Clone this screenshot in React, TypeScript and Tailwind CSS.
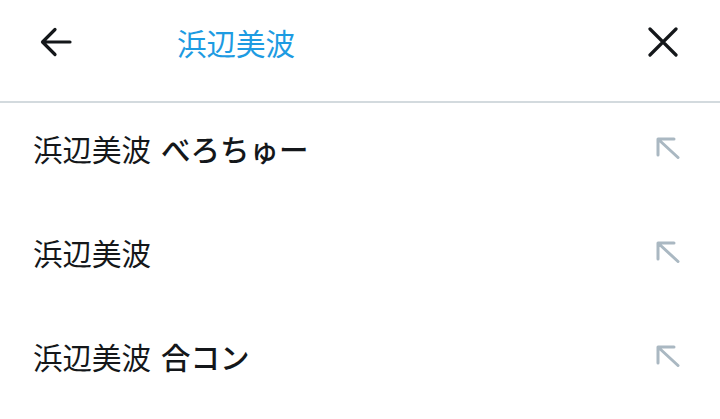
const font = { fontFamily: '"Noto Sans CJK JP", "Noto Sans", sans-serif' };

function BackIcon() {
  return (
    <svg width="32" height="30" viewBox="0 0 32 30" fill="none" stroke="#14171a" strokeWidth="3.2" strokeLinecap="round" strokeLinejoin="round">
      <path d="M30 15H3M15 2.5L2.5 15L15 27.5" />
    </svg>
  );
}

function CloseIcon() {
  return (
    <svg width="30" height="30" viewBox="0 0 30 30" fill="none" stroke="#14171a" strokeWidth="3.2" strokeLinecap="round">
      <path d="M2 2L28 28M28 2L2 28" />
    </svg>
  );
}

function FillIcon() {
  return (
    <svg width="24" height="22" viewBox="0 0 24 22" fill="none" stroke="#aab8c2" strokeWidth="3" strokeLinecap="round" strokeLinejoin="round">
      <path d="M2 2H18M2 2V18M2.5 2.5L22 20.5" />
    </svg>
  );
}

const suggestions = [
  { base: '浜辺美波', extra: 'べろちゅー' },
  { base: '浜辺美波', extra: '' },
  { base: '浜辺美波', extra: '合コン' },
];

export default function App() {
  return (
    <div className="w-[720px] h-[419px] bg-white overflow-hidden text-[#14171a]" style={font}>
      <header className="h-[103px] flex items-center border-b-2 border-[#d3dade] pb-[17px]">
        <button className="ml-[40px] w-[32px] flex items-center">
          <BackIcon />
        </button>
        <p className="ml-[105px] text-[29.5px] leading-[40px] text-[#1d9be2]">浜辺美波</p>
        <button className="ml-auto mr-[42px] flex items-center">
          <CloseIcon />
        </button>
      </header>

      <ul>
        {suggestions.map((s, i) => (
          <li key={i} className="flex items-center justify-between pl-[33px] pr-[40px] pt-[25px] pb-[39px]">
            <p className="text-[29.5px] leading-[40px]">
              {s.base}
              {s.extra && <span className="ml-[10px] font-medium">{s.extra}</span>}
            </p>
            <FillIcon />
          </li>
        ))}
      </ul>
    </div>
  );
}
